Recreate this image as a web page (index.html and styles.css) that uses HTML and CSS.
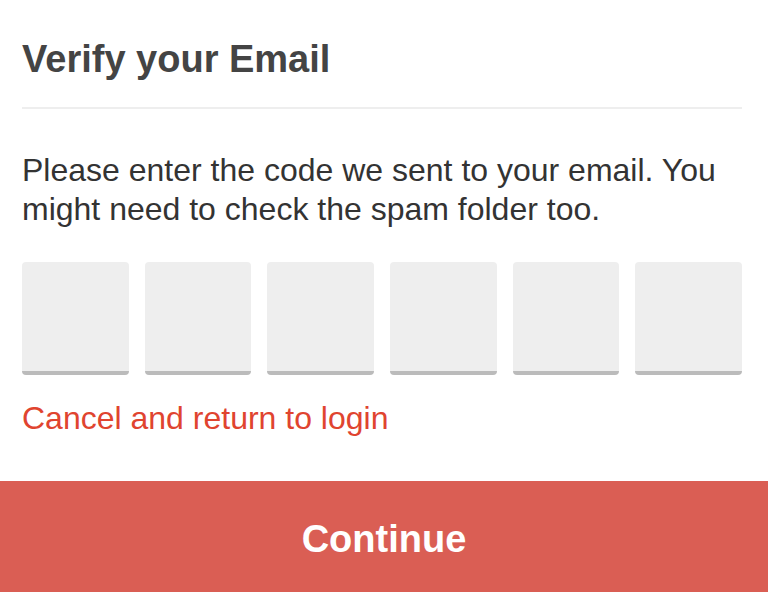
FILE: index.html
```html
<!DOCTYPE html>
<html>
<head>
<meta charset="utf-8">
<link rel="stylesheet" href="styles.css">
</head>
<body>
<div class="card">
  <div class="content">
    <h1 class="title">Verify your Email</h1>
    <hr class="divider">
    <p class="desc">Please enter the code we sent to your email. You might need to check the spam folder too.</p>
    <div class="codes">
      <div class="code"></div>
      <div class="code"></div>
      <div class="code"></div>
      <div class="code"></div>
      <div class="code"></div>
      <div class="code"></div>
    </div>
    <a class="cancel" href="#">Cancel and return to login</a>
  </div>
  <button class="continue">Continue</button>
</div>
</body>
</html>
```
FILE: styles.css
```css
html, body {
  margin: 0;
  padding: 0;
  background: #fff;
}
body {
  font-family: "Liberation Sans", Arial, sans-serif;
  width: 768px;
  height: 592px;
  overflow: hidden;
}
.card {
  display: flex;
  flex-direction: column;
  height: 592px;
}
.content {
  padding: 0 26px 0 22px;
  flex: 1;
}
.title {
  margin: 0;
  padding-top: 35px;
  font-size: 38px;
  line-height: 48px;
  font-weight: bold;
  color: #444;
}
.divider {
  border: 0;
  height: 2px;
  background: #eee;
  margin: 24px 0 0 0;
}
.desc {
  margin: 42px 0 0 0;
  font-size: 32px;
  line-height: 38.5px;
  color: #333;
}
.codes {
  display: flex;
  gap: 16px;
  margin-top: 34px;
}
.code {
  flex: 1;
  height: 109px;
  background: #eee;
  border-radius: 4px;
  border-bottom: 4px solid #bbb;
}
.cancel {
  display: block;
  margin-top: 24px;
  font-size: 32px;
  line-height: 38px;
  color: #e0442f;
  text-decoration: none;
}
.continue {
  height: 111px;
  border: 0;
  background: #da5e54;
  color: #fff;
  font-family: "Liberation Sans", Arial, sans-serif;
  font-size: 38px;
  font-weight: bold;
  padding: 6px 0 0 0;
  width: 100%;
}
```
